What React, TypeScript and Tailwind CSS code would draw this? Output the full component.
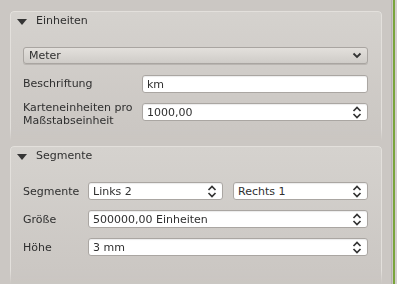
import React from 'react';

const Triangle = () => (
  <svg width="10" height="6" viewBox="0 0 10 6" className="mt-[3px]">
    <path d="M0 0 L10 0 L5 6 Z" fill="#353535" />
  </svg>
);

const ChevronDown = () => (
  <svg width="10" height="7" viewBox="0 0 10 7">
    <path d="M1.5 1.5 L5 5 L8.5 1.5" fill="none" stroke="#333" strokeWidth="1.8" />
  </svg>
);

const UpDown = () => (
  <svg width="10" height="13" viewBox="0 0 10 13">
    <path d="M1.5 5 L5 1.5 L8.5 5" fill="none" stroke="#333" strokeWidth="1.7" />
    <path d="M1.5 8 L5 11.5 L8.5 8" fill="none" stroke="#333" strokeWidth="1.7" />
  </svg>
);

function Field({ value, spin, className = '' }: { value: string; spin?: boolean; className?: string }) {
  return (
    <div
      className={`h-[18px] flex items-center justify-between pl-[4px] pr-[5px] bg-white border border-[#aaa6a2] rounded-[3px] shadow-[inset_0_1px_1px_rgba(0,0,0,0.08)] ${className}`}
    >
      <span>{value}</span>
      {spin && <UpDown />}
    </div>
  );
}

function Group({ title, height, children }: { title: string; height: string; children: React.ReactNode }) {
  return (
    <div
      className={`w-[372px] ${height} border border-b-0 border-[#e3e0dc] rounded-t-[4px] bg-gradient-to-b from-[#d5d2ce] to-[#cac6c2] shadow-[0_-1px_0_#bfbbb7] pl-[12px] pr-[13px] [mask-image:linear-gradient(to_bottom,black_90%,transparent)]`}
    >
      <div className="flex items-center gap-[9px] pt-[2px] -ml-[6px] h-[15px]">
        <Triangle />
        <span>{title}</span>
      </div>
      {children}
    </div>
  );
}

export default function App() {
  return (
    <div
      className="w-[397px] h-[284px] flex bg-[#cbc7c3] text-[11px] leading-[13px] text-[#2f2f2f] overflow-hidden"
      style={{ fontFamily: '"DejaVu Sans", sans-serif' }}
    >
      <div className="w-[391px] pl-[10px] pt-[11px] flex flex-col gap-[5px]">
        {/* EINHEITEN */}
        <Group title="Einheiten" height="h-[132px]">
          <div className="mt-[20px] h-[17px] flex items-center justify-between pl-[5px] pr-[5px] border border-[#a9a5a1] rounded-[3px] bg-gradient-to-b from-[#e3e0dc] to-[#cfccc8] shadow-[0_1px_0_#b9b5b1]">
            <span>Meter</span>
            <ChevronDown />
          </div>
          <div className="grid grid-cols-[119px_1fr] items-start mt-[11px] gap-y-[10px]">
            <span className="mt-[2px]">Beschriftung</span>
            <Field value="km" />
            <span className="-mt-[2px]">
              Karteneinheiten pro
              <br />
              Maßstabseinheit
            </span>
            <Field value="1000,00" spin />
          </div>
        </Group>

        {/* SEGMENTE */}
        <Group title="Segmente" height="h-[140px]">
          <div className="grid grid-cols-[65px_1fr] items-center mt-[20px] gap-y-[10px]">
            <span>Segmente</span>
            <div className="flex gap-[10px]">
              <Field value="Links 2" spin className="w-[135px]" />
              <Field value="Rechts 1" spin className="flex-1" />
            </div>
            <span>Größe</span>
            <Field value="500000,00 Einheiten" spin />
            <span>Höhe</span>
            <Field value="3 mm" spin />
          </div>
        </Group>
      </div>
      <div className="w-[1px] bg-[#b7b3af]" />
      <div className="w-[1px]" />
      <div className="w-[2px] bg-[#79a43b]" />
      <div className="w-[2px] bg-[#d2cfcb]" />
    </div>
  );
}
